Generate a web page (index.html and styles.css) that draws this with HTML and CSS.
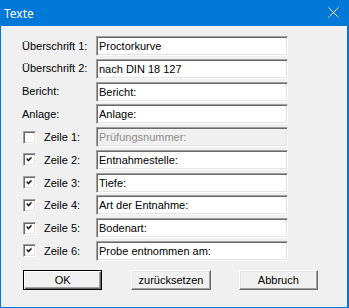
FILE: index.html
```html
<!DOCTYPE html>
<html>
<head>
	<title>Texte</title>
	<link rel="stylesheet" href="styles.css">
</head>
<body>
	<div class="window">
		<div class="titlebar">
			<span class="title">Texte</span>
			<svg class="close" width="11" height="11" viewBox="0 0 11 11">
				<path d="M0.5 0.5 L10.5 10.5 M10.5 0.5 L0.5 10.5" stroke="#fff" stroke-width="1" fill="none"/>
			</svg>
		</div>

		<div class="content">
			<div class="form">
				<div class="lbl">Überschrift 1:</div>
				<input class="field" type="text" value="Proctorkurve">

				<div class="lbl">Überschrift 2:</div>
				<input class="field" type="text" value="nach DIN 18 127">

				<div class="lbl">Bericht:</div>
				<input class="field" type="text" value="Bericht:">

				<div class="lbl">Anlage:</div>
				<input class="field" type="text" value="Anlage:">

				<div class="lbl check">
					<span class="box"></span>
					<span>Zeile 1:</span>
				</div>
				<input class="field" type="text" value="Prüfungsnummer:" disabled>

				<div class="lbl check">
					<span class="box"><svg width="9" height="9" viewBox="0 0 13 13"><path d="M3 5h1v3h-1z M4 6h1v3h-1z M5 7h1v3h-1z M6 6h1v3h-1z M7 5h1v3h-1z M8 4h1v3h-1z M9 3h1v3h-1z" fill="#000" transform="translate(-2 -2)"/></svg></span>
					<span>Zeile 2:</span>
				</div>
				<input class="field" type="text" value="Entnahmestelle:">

				<div class="lbl check">
					<span class="box"><svg width="9" height="9" viewBox="0 0 13 13"><path d="M3 5h1v3h-1z M4 6h1v3h-1z M5 7h1v3h-1z M6 6h1v3h-1z M7 5h1v3h-1z M8 4h1v3h-1z M9 3h1v3h-1z" fill="#000" transform="translate(-2 -2)"/></svg></span>
					<span>Zeile 3:</span>
				</div>
				<input class="field" type="text" value="Tiefe:">

				<div class="lbl check">
					<span class="box"><svg width="9" height="9" viewBox="0 0 13 13"><path d="M3 5h1v3h-1z M4 6h1v3h-1z M5 7h1v3h-1z M6 6h1v3h-1z M7 5h1v3h-1z M8 4h1v3h-1z M9 3h1v3h-1z" fill="#000" transform="translate(-2 -2)"/></svg></span>
					<span>Zeile 4:</span>
				</div>
				<input class="field" type="text" value="Art der Entnahme:">

				<div class="lbl check">
					<span class="box"><svg width="9" height="9" viewBox="0 0 13 13"><path d="M3 5h1v3h-1z M4 6h1v3h-1z M5 7h1v3h-1z M6 6h1v3h-1z M7 5h1v3h-1z M8 4h1v3h-1z M9 3h1v3h-1z" fill="#000" transform="translate(-2 -2)"/></svg></span>
					<span>Zeile 5:</span>
				</div>
				<input class="field" type="text" value="Bodenart:">

				<div class="lbl check">
					<span class="box"><svg width="9" height="9" viewBox="0 0 13 13"><path d="M3 5h1v3h-1z M4 6h1v3h-1z M5 7h1v3h-1z M6 6h1v3h-1z M7 5h1v3h-1z M8 4h1v3h-1z M9 3h1v3h-1z" fill="#000" transform="translate(-2 -2)"/></svg></span>
					<span>Zeile 6:</span>
				</div>
				<input class="field" type="text" value="Probe entnommen am:">
			</div>

			<div class="buttons">
				<button class="btn default">OK</button>
				<button class="btn">zurücksetzen</button>
				<button class="btn">Abbruch</button>
			</div>
		</div>
	</div>
</body>
</html>
```

FILE: styles.css
```css
html, body {
	margin: 0;
	padding: 0;
	background: #ffffff;
}

.window {
	width: 349px;
	height: 308px;
	box-sizing: border-box;
	background: #0078d7;
	padding: 0 2px 1px 1px;
	display: flex;
	flex-direction: column;
	font-family: "Liberation Sans", Arial, sans-serif;
	font-size: 11px;
	color: #000;
}

.titlebar {
	height: 26px;
	display: flex;
	align-items: center;
	justify-content: space-between;
	padding: 0 10px 0 3px;
	margin: 0 -2px 0 -1px;
	color: #fff;
}

.title {
	font-family: "Noto Sans", "Liberation Sans", sans-serif;
	font-size: 12px;
	padding-left: 1px;
}

.close {
	display: block;
	margin-top: -1px;
}

.content {
	flex: 1;
	background: #f0f0f0;
	padding: 10px 0 0 21px;
}

.form {
	display: grid;
	grid-template-columns: 74px 192px;
	grid-auto-rows: 20px;
	row-gap: 2.78px;
	align-items: center;
}

.lbl {
	white-space: nowrap;
	margin-top: -1px;
}

.check {
	display: flex;
	align-items: center;
	gap: 8px;
	margin-top: 0;
}

.box {
	width: 13px;
	height: 13px;
	box-sizing: border-box;
	background: #fff;
	border-top: 1px solid #a0a0a0;
	border-left: 1px solid #a0a0a0;
	border-bottom: 1px solid #fff;
	border-right: 1px solid #fff;
	box-shadow: inset 1px 1px #696969, inset -1px -1px #e3e3e3;
	display: flex;
	align-items: center;
	justify-content: center;
	margin-left: 1px;
}

.box svg {
	display: block;
	margin: 1px 0 0 1px;
}

.field {
	width: 192px;
	height: 20px;
	box-sizing: border-box;
	margin: 0;
	padding: 0 0 0 2px;
	font-family: "Liberation Sans", Arial, sans-serif;
	font-size: 11px;
	color: #000;
	background: #fff;
	border-top: 1px solid #a0a0a0;
	border-left: 1px solid #a0a0a0;
	border-bottom: 1px solid #fff;
	border-right: 1px solid #fff;
	box-shadow: inset 1px 1px #696969, inset -1px -1px #e3e3e3;
	outline: none;
}

.field:disabled {
	background: #f0f0f0;
	color: #8d8d8d;
}

.buttons {
	display: flex;
	margin-top: 9px;
	margin-left: 1px;
}

.btn {
	width: 84px;
	height: 20px;
	box-sizing: border-box;
	margin: 0 29px 0 0;
	padding: 0;
	font-family: "Liberation Sans", Arial, sans-serif;
	font-size: 11px;
	color: #000;
	background: #f0f0f0;
	border-top: 1px solid #fff;
	border-left: 1px solid #fff;
	border-bottom: 1px solid #696969;
	border-right: 1px solid #696969;
	box-shadow: inset -1px -1px #a0a0a0, inset 1px 1px #e3e3e3;
}

.btn:nth-child(2) {
	margin-right: 28px;
}

.btn.default {
	border: 1px solid #000;
	box-shadow: inset 1px 1px #fff, inset -1px -1px #696969, inset -2px -2px #a0a0a0;
}
```
